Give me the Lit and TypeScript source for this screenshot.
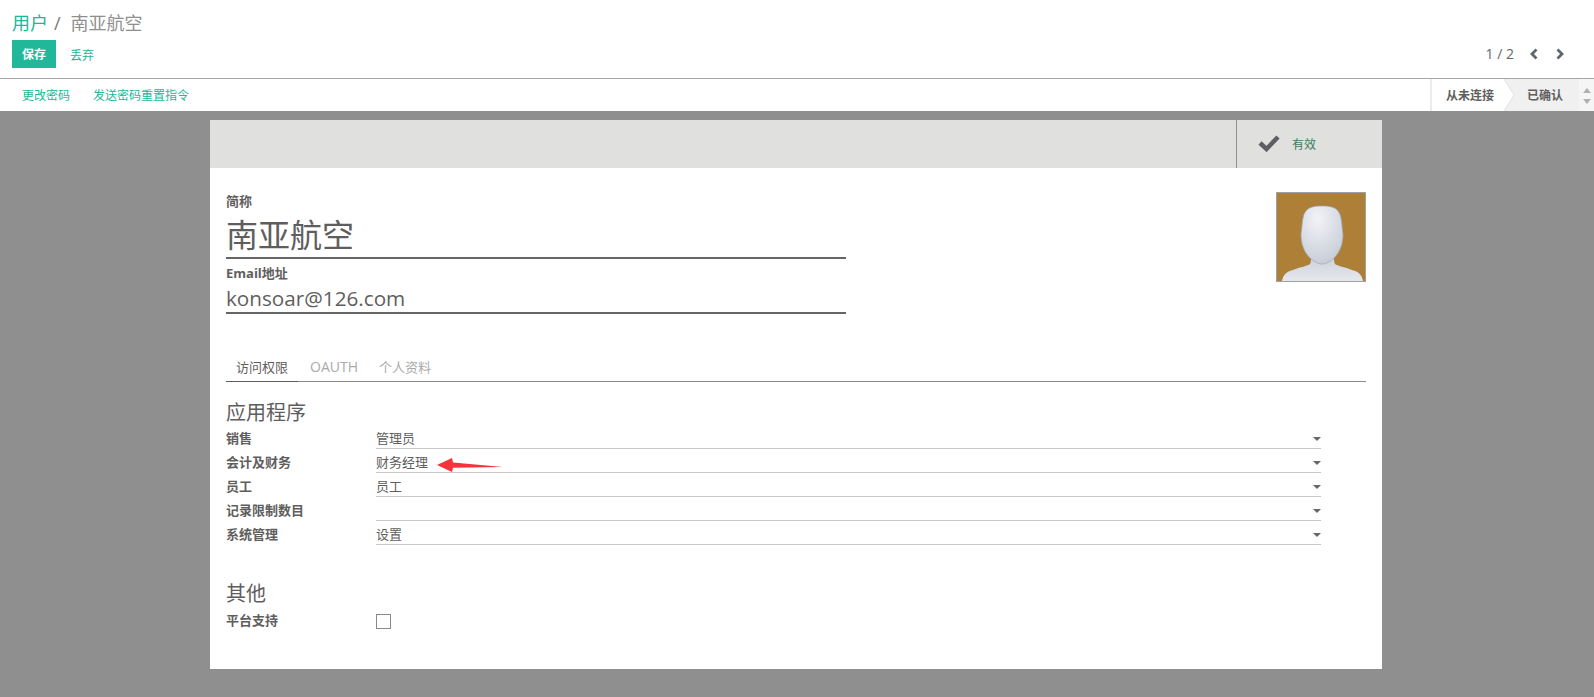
import { LitElement, html, css, svg } from "lit";
import { customElement } from "lit/decorators.js";

const rows = [
  ["销售", "管理员"],
  ["会计及财务", "财务经理"],
  ["员工", "员工"],
  ["记录限制数目", ""],
  ["系统管理", "设置"],
];

@customElement("app-root")
export class AppRoot extends LitElement {
  static styles = css`
    :host {
      display: block;
      width: 1594px;
      height: 697px;
      overflow: hidden;
      background: #8f8f8f;
      font-family: "Open Sans", "Noto Sans CJK SC", sans-serif;
      font-size: 13px;
      color: #5f5e5e;
    }
    .top {
      background: #fff;
      padding: 10px 12px 0;
      box-sizing: border-box;
      border-bottom: 1px solid #a5a5a5;
      height: 79px;
    }
    .crumbs {
      font-size: 18px;
      line-height: 26px;
      height: 30px;
      color: #8f8f8f;
      display: flex;
    }
    .crumbs a { color: #21b799; }
    .crumbs .sep { margin: 0 10px 0 6px; color: #777; }
    .actions {
      display: flex;
      align-items: center;
      justify-content: space-between;
    }
    .actions .left { display: flex; align-items: center; }
    .save {
      width: 44px;
      height: 28px;
      background: #21b799;
      color: #fff;
      font-size: 12px;
      font-weight: 700;
      display: flex;
      align-items: center;
      justify-content: center;
    }
    .discard { color: #21b799; font-size: 12px; margin-left: 14px; padding-top: 2px; }
    .pager {
      display: flex;
      align-items: center;
      font-size: 14px;
      color: #666;
      margin-right: 17px;
      margin-top: -2px;
    }
    .pager svg { display: block; margin-top: 1px; }
    .pager .p1 { margin-left: 15px; }
    .pager .p2 { margin-left: 16px; }
    .bar {
      height: 32px;
      background: #fff;
      display: flex;
      justify-content: space-between;
      align-items: stretch;
    }
    .links { display: flex; align-items: center; padding-left: 22px; gap: 23px; color: #21b799; font-size: 12px; }
    .status { display: flex; align-items: stretch; font-size: 12px; font-weight: 700; color: #5f5e5e; }
    .st {
      display: flex;
      align-items: center;
      position: relative;
    }
    .st.a { width: 74px; padding-left: 14px; box-sizing: border-box; border-left: 2px solid #ececec; background: #fff; }
    .st.b { width: 75px; padding-left: 23px; box-sizing: border-box; background: #f0f0f0; }
    .chev { position: absolute; left: 0; top: 0; display: block; }
    .scroll {
      width: 15px;
      background: #f5f5f5;
      display: flex;
      flex-direction: column;
      justify-content: space-between;
      align-items: center;
      padding: 9px 0 7px;
      box-sizing: border-box;
    }
    .up { width: 0; height: 0; border: 4px solid transparent; border-top: 0; border-bottom: 5px solid #b0b0b0; }
    .down { width: 0; height: 0; border: 4px solid transparent; border-bottom: 0; border-top: 5px solid #b0b0b0; }
    .bg { padding: 9px 0 0 210px; }
    .sheet { width: 1172px; height: 549px; background: #fff; position: relative; }
    .sheethead { height: 48px; background: #e0e0de; display: flex; justify-content: flex-end; }
    .active {
      width: 146px;
      box-sizing: border-box;
      border-left: 1px solid #8f8f8f;
      display: flex;
      align-items: center;
      padding-left: 21px;
      gap: 12px;
      font-size: 12px;
      color: #3c7a5c;
    }
    .active svg { margin-top: -2px; }
    .body { padding: 24px 16px 0; }
    .head { display: flex; justify-content: space-between; height: 133px; }
    .title { width: 620px; }
    .lbl { font-weight: 700; font-size: 13px; line-height: 18px; color: #5f5e5e; }
    .name {
      font-size: 32px;
      line-height: 49px;
      height: 47px;
      border-bottom: 2px solid #666;
      color: #5f5e5e;
      margin-bottom: 5px;
    }
    .mail {
      font-size: 20.700px;
      line-height: 32px;
      height: 30px;
      border-bottom: 2px solid #666;
      color: #5f5e5e;
    }
    .avatar {
      width: 90px;
      height: 90px;
      box-sizing: border-box;
      border: 1px solid #a0a0a0;
      background: #ad7f37;
    }
    .avatar svg { display: block; }
    .tabs {
      display: flex;
      height: 36px;
      box-sizing: border-box;
      border-bottom: 1px solid #8a8a8a;
      font-size: 13px;
      color: #aaa;
      margin-top: 21px;
    }
    .tab { padding: 3px 10px 0; line-height: 36px; margin-right: 2px; height: 36px; box-sizing: border-box; }
    .tab.en { font-size: 14px; margin-right: 1px; }
    .tab.on { color: #5f5e5e; border-bottom: 1px solid #5f5e5e; }
    .h { font-size: 20px; line-height: 26px; color: #5f5e5e; font-weight: 400; }
    .h.first { margin-top: 18px; margin-bottom: -1px; }
    .h.second { margin-top: 36px; }
    .row { display: grid; grid-template-columns: 150px 945px; height: 24px; }
    .row .k { font-weight: 700; font-size: 13px; line-height: 23px; padding-top: 2px; }
    .row .v {
      border-bottom: 1px solid #c8c8c8;
      display: flex;
      align-items: center;
      justify-content: space-between;
      height: 24px;
      padding-top: 1px;
      box-sizing: border-box;
      font-size: 13px;
    }
    .caret { width: 0; height: 0; border: 4px solid transparent; border-bottom: 0; border-top: 4px solid #666; margin-top: 4px; }
    .check-row { display: grid; grid-template-columns: 150px 15px; align-items: center; margin-top: 3px; }
    .check-row .k { font-weight: 700; font-size: 13px; padding-bottom: 2px; }
    .box { width: 15px; height: 15px; box-sizing: border-box; border: 1px solid #8a8a8a; margin-top: 1px; }
    .arrow { position: absolute; left: 225px; top: 335px; display: block; }
  `;

  render() {
    return html`
      <div class="top">
        <div class="crumbs"><a>用户</a><span class="sep">/</span><span>南亚航空</span></div>
        <div class="actions">
          <div class="left"><div class="save">保存</div><div class="discard">丢弃</div></div>
          <div class="pager">
            <span>1 / 2</span>
            <svg class="p1" width="10" height="12" viewBox="0 0 10 12"><path d="M7.500 1.500 3 6l4.500 4.500" fill="none" stroke="#5f6670" stroke-width="2.800"/></svg>
            <svg class="p2" width="10" height="12" viewBox="0 0 10 12"><path d="M2.500 1.500 7 6l-4.500 4.500" fill="none" stroke="#5f6670" stroke-width="2.800"/></svg>
          </div>
        </div>
      </div>
      <div class="bar">
        <div class="links"><span>更改密码</span><span>发送密码重置指令</span></div>
        <div class="status">
          <div class="st a">从未连接</div>
          <div class="st b">
            <svg class="chev" width="12" height="32" viewBox="0 0 12 32"><path d="M0 0 10 16 0 32Z" fill="#fff"/><path d="M0 0 10 16 0 32" fill="none" stroke="#e2e2e2"/></svg>
            已确认
          </div>
          <div class="scroll"><div class="up"></div><div class="down"></div></div>
        </div>
      </div>
      <div class="bg">
        <div class="sheet">
          <div class="sheethead">
            <div class="active">
              <svg width="22" height="18" viewBox="0 0 22 18"><path d="M2 9l6.500 6L20 3" fill="none" stroke="#5f5e63" stroke-width="4.500"/></svg>
              <span>有效</span>
            </div>
          </div>
          <div class="body">
            <div class="head">
              <div class="title">
                <div class="lbl">简称</div>
                <div class="name">南亚航空</div>
                <div class="lbl">Email地址</div>
                <div class="mail">konsoar@126.com</div>
              </div>
              <div class="avatar">
                <svg width="88" height="88" viewBox="0 0 88 88">
                  <defs>
                    <radialGradient id="hd" cx="0.4" cy="0.22" r="0.85">
                      <stop offset="0" stop-color="#f2f3f6"/><stop offset="1" stop-color="#c4cad6"/>
                    </radialGradient>
                    <linearGradient id="bd" x1="0" y1="0" x2="0" y2="1">
                      <stop offset="0" stop-color="#cdd2db"/><stop offset="1" stop-color="#e6e8ed"/>
                    </linearGradient>
                  </defs>
                  <path d="M5 88c1-5 3-9 11-11 7-3 15-4 17-6 1-2 1-4 1-6h23c0 2 0 4 1 6 2 2 10 3 17 6 8 2 10 6 11 11Z" fill="url(#bd)"/>
                  <path d="M45 13c-11 0-17 2-19 12-1 5-1 10-2 16 0 10 3 18 9 24 3 3 8 6 12 6s9-3 12-6c6-6 9-14 9-24-1-6-1-11-2-16-2-10-8-12-19-12Z" fill="url(#hd)" stroke="#9ea7b7" stroke-width=".7"/>
                </svg>
              </div>
            </div>
            <div class="tabs">
              <div class="tab on">访问权限</div>
              <div class="tab en">OAUTH</div>
              <div class="tab">个人资料</div>
            </div>
            <div class="h first">应用程序</div>
            ${rows.map(
              ([k, v]) => html`<div class="row"><div class="k">${k}</div><div class="v"><span>${v}</span><i class="caret"></i></div></div>`
            )}
            <div class="h second">其他</div>
            <div class="check-row"><div class="k">平台支持</div><div class="box"></div></div>
          </div>
          <svg class="arrow" width="70" height="18" viewBox="0 0 70 18">
            ${svg`<path d="M2 10 17 3 18 7.500 68 12 18 12.800 17 17Z" fill="#f5333a"/>`}
          </svg>
        </div>
      </div>
    `;
  }
}
